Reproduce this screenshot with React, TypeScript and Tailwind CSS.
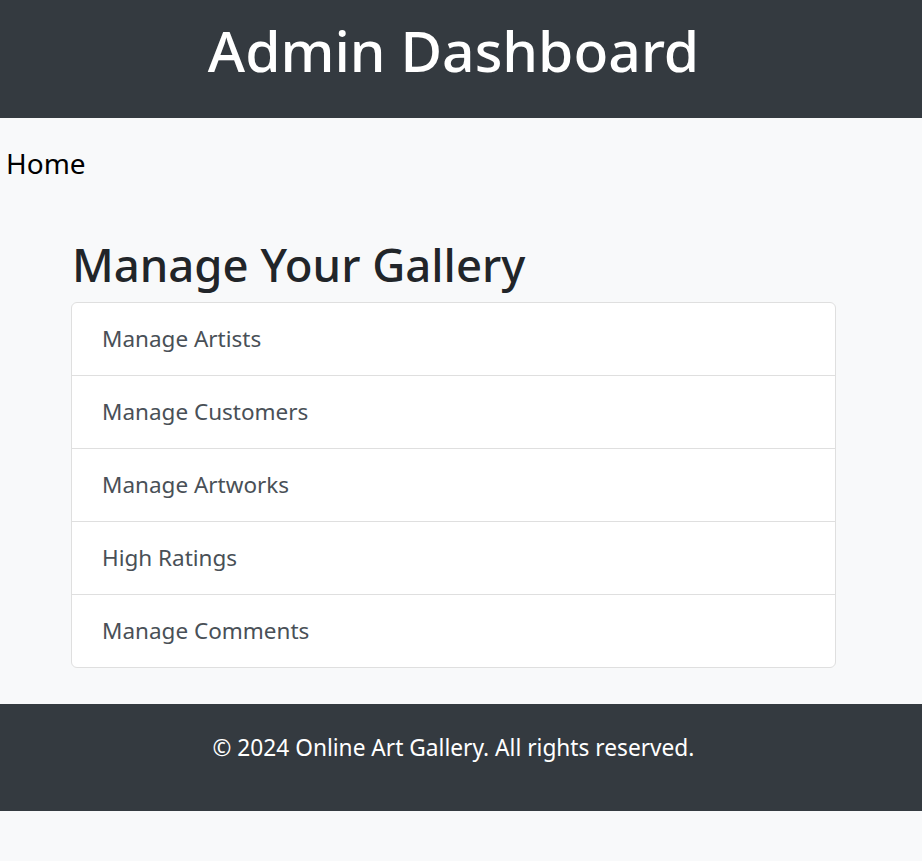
const items = ['Manage Artists', 'Manage Customers', 'Manage Artworks', 'High Ratings', 'Manage Comments'];

export default function App() {
  return (
    <div className="min-h-[861px] bg-[#f8f9fa] font-['Noto_Sans',sans-serif] text-[#212529]">
      <header className="h-[118px] bg-[#343a40] text-white flex items-center justify-center pr-[15px]">
        <h1 className="text-[57px] leading-[72px] font-medium -mt-[19px]">Admin Dashboard</h1>
      </header>

      <nav className="pl-[6px] pt-[27px]">
        <a className="text-[28px] leading-[36px] text-black">Home</a>
      </nav>

      <main className="ml-[71px] w-[765px] pt-[55px] pb-[36px]">
        <h2 className="text-[45.5px] leading-[56px] font-medium mb-[10px] ml-[1px]">Manage Your Gallery</h2>
        <div className="bg-white border border-[#dfdfdf] rounded-[6px]">
          {items.map((item, i) => (
            <div
              key={item}
              className={`box-content h-[72px] flex items-center px-[30px] text-[22.5px] text-[#495057] ${
                i > 0 ? 'border-t border-[#dfdfdf]' : ''
              }`}
            >
              {item}
            </div>
          ))}
        </div>
      </main>

      <footer className="h-[107px] bg-[#343a40] text-white flex items-center justify-center pr-[15px]">
        <p className="text-[22.7px] -mt-[18px]">© 2024 Online Art Gallery. All rights reserved.</p>
      </footer>
    </div>
  );
}
